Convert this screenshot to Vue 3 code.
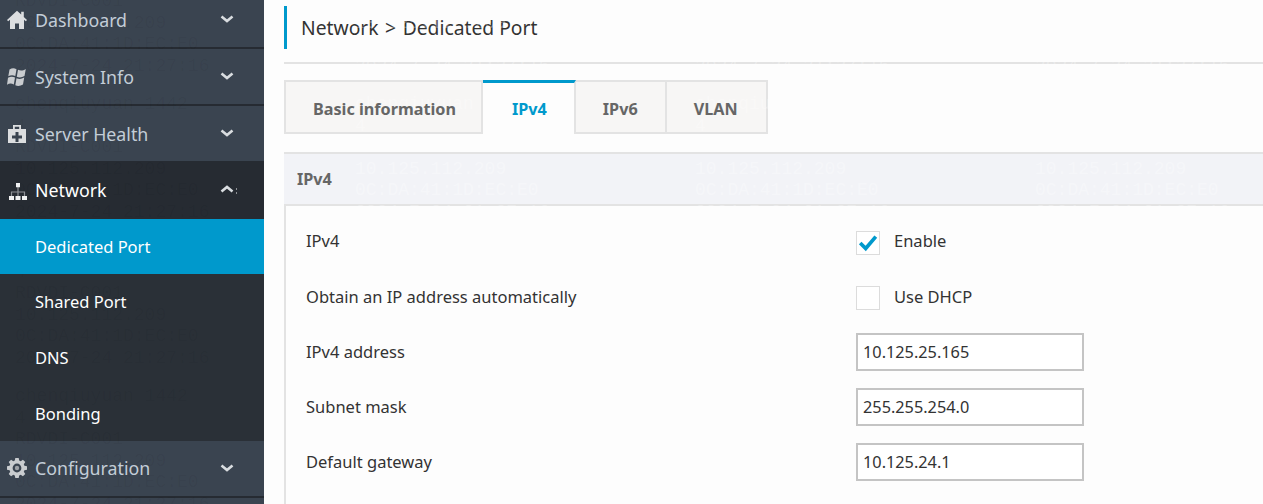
<script setup>
const topItems = [
  { label: 'Dashboard', icon: 'home' },
  { label: 'System Info', icon: 'win' },
  { label: 'Server Health', icon: 'med' }
]
const subItems = ['Shared Port', 'DNS', 'Bonding']
const tabs = ['Basic information', 'IPv4', 'IPv6', 'VLAN']
const fields = [
  { label: 'IPv4 address', value: '10.125.25.165' },
  { label: 'Subnet mask', value: '255.255.254.0' },
  { label: 'Default gateway', value: '10.125.24.1' }
]
const wmLines = ['chenqiuyuan 1442', '4', 'RDVDI-C001', '10.125.112.209', '0C:DA:41:1D:EC:E0', '2024-7-24 21:27:16']
const wmCells = 16
</script>

<template>
  <div class="page">
    <aside class="side">
      <div v-for="it in topItems" :key="it.label" class="top plain">
        <svg class="ico" viewBox="0 0 20 20">
          <path v-if="it.icon === 'home'" fill="#dcdee0" d="M10 .8 0 10l1.200 1.300L3 9.800V19h5v-5.500h4V19h5V9.800l1.800 1.500L20 10l-3.200-3V1.800h-2.600v2.700z" />
          <path v-else-if="it.icon === 'win'" fill="#c9cccf" d="M2.500 2.500C5 1 7.200 1 9.500 2.200L8.300 9C6 8 3.700 8 1.300 9.300zM11 2.800c2.500 1.200 5 1 7.800-.8l-1.300 7c-2.700 1.700-5.200 1.900-7.700.8zM1 10.800C3.400 9.600 5.700 9.600 8 10.600L6.800 17.500C4.500 16.300 2.300 16.300 0 17.700zM9.500 11.300c2.500 1.100 5 1 7.700-.7L16 17.400c-2.700 1.700-5.200 1.900-7.700.8z" />
          <path v-else fill="#dcdee0" fill-rule="evenodd" d="M6 1h8v4h5v14H1V5h5zM7.800 2.800V5h4.400V2.800zM8.500 8v3.500H5v3h3.500V18h3v-3.500H15v-3h-3.500V8z" />
        </svg>
        <span class="top-label">{{ it.label }}</span>
        <svg class="chev" viewBox="0 0 14 8"><path d="M1.500 1.500 7 6l5.500-4.500" /></svg>
      </div>

      <div class="top open">
        <svg class="ico net" viewBox="0 0 20 20">
          <path fill="none" stroke="#8d9095" stroke-width="1.200" d="M10 6v5M3.500 15v-4h13v4M10 11v4" />
          <path fill="#f0f1f2" d="M8 2h4v4.200H8zM1 15h5v4H1zM7.500 15h5v4h-5zM14 15h5v4h-5z" />
        </svg>
        <span class="top-label">Network</span>
        <svg class="chev up" viewBox="0 0 14 8"><path d="M1.500 6.500 7 2l5.500 4.500" /></svg>
        <span class="chev-tail"></span>
      </div>
      <div class="sub active"><span class="sub-text">Dedicated Port</span></div>
      <div v-for="s in subItems" :key="s" class="sub"><span class="sub-text">{{ s }}</span></div>

      <div class="top last">
        <svg class="ico" viewBox="0 0 20 20">
          <path fill="#c9cccf" fill-rule="evenodd" d="M8.300 0h3.400l.5 2.600 1.500.6 2.200-1.500 2.400 2.400-1.500 2.200.6 1.500L20 8.300v3.400l-2.600.5-.6 1.500 1.500 2.200-2.400 2.400-2.200-1.500-1.500.6-.5 2.600H8.300l-.5-2.600-1.500-.6-2.200 1.500-2.400-2.400 1.500-2.200-.6-1.500L0 11.700V8.300l2.600-.5.6-1.500-1.500-2.200 2.400-2.400 2.200 1.500 1.500-.6zM10 5.600a4.400 4.400 0 1 0 0 8.800 4.400 4.400 0 0 0 0-8.800z" />
          <circle cx="10" cy="10" r="2.200" fill="#9ea2a7" />
        </svg>
        <span class="top-label">Configuration</span>
        <svg class="chev" viewBox="0 0 14 8"><path d="M1.500 1.500 7 6l5.500-4.500" /></svg>
      </div>

      <div class="wm dark" aria-hidden="true">
        <div v-for="n in wmCells" :key="n" class="wm-cell">
          <div v-for="l in wmLines" :key="l">{{ l }}</div>
        </div>
      </div>
    </aside>

    <main class="main">
      <header class="crumb">
        <h1 class="crumb-title">Network <span class="gt">&gt;</span> Dedicated Port</h1>
      </header>

      <nav class="tabs">
        <div v-for="t in tabs" :key="t" class="tab" :class="{ on: t === 'IPv4' }"><span class="fg">{{ t }}</span></div>
      </nav>

      <section class="panel">
        <div class="panel-head"><span class="fg">IPv4</span></div>
        <div class="form">
          <div class="row">
            <span class="lab fg">IPv4</span>
            <span class="check fg">
              <svg viewBox="0 0 24 24"><path d="M3.500 12 9.500 18 20.500 5" /></svg>
            </span>
            <span class="opt fg">Enable</span>
          </div>
          <div class="row">
            <span class="lab fg">Obtain an IP address automatically</span>
            <span class="check fg"></span>
            <span class="opt fg">Use DHCP</span>
          </div>
          <div v-for="f in fields" :key="f.label" class="row">
            <span class="lab fg">{{ f.label }}</span>
            <input class="inp fg" :value="f.value" />
          </div>
        </div>
      </section>

      <div class="wm light" aria-hidden="true">
        <div v-for="n in wmCells" :key="n" class="wm-cell">
          <div v-for="l in wmLines" :key="l">{{ l }}</div>
        </div>
      </div>
    </main>
  </div>
</template>

<style>
html, body { margin: 0; height: 100%; overflow: hidden; background: #fdfdfd; }
</style>

<style scoped>
.page {
  display: flex;
  height: 504px;
  overflow: hidden;
  font-family: "Noto Sans", "Open Sans", sans-serif;
  background: #fdfdfd;
}
.side {
  position: relative;
  z-index: 0;
  flex: 0 0 264px;
  height: 504px;
  overflow: hidden;
  background: #3a4450;
}
.top {
  display: flex;
  align-items: center;
  height: 55px;
  padding-left: 7px;
  border-bottom: 2px solid #262b32;
  color: #c3cdd7;
  font-size: 17.800px;
}
.top:first-child { margin-top: -8px; }
.top.open {
  height: 56px;
  border: 0;
  background: #262b32;
  color: #fff;
}
.ico, .top-label, .chev, .chev-tail, .sub-text, .fg { position: relative; z-index: 2; }
.top.plain .chev { top: -1px; }
.top.open .top-label { top: -1px; }
.top.open .chev { top: -2px; }
.ico { flex: 0 0 20px; width: 20px; height: 20px; margin-right: 8px; }
.ico.net { margin-left: 1px; margin-right: 7px; }
.top-label { flex: 1; }
.chev { flex: 0 0 14px; width: 14px; height: 8px; margin-right: 30px; fill: none; stroke: #d9dde0; stroke-width: 2.600; }
.chev.up { margin-right: 2px; }
.chev-tail { flex: 0 0 1px; height: 7px; margin-right: 27px; background: repeating-linear-gradient(#8d9095 0 2px, transparent 2px 4px); }
.sub {
  display: flex;
  align-items: center;
  height: 55.670px;
  padding-left: 35px;
  background: #2a3037;
  color: #fff;
  font-size: 16.500px;
}
.sub.active { position: relative; z-index: 3; height: 55px; background: #0099cc; }

.main {
  position: relative;
  z-index: 0;
  flex: 1;
  height: 504px;
  padding: 0 0 0 20px;
  overflow: hidden;
}
.crumb {
  height: 64px;
  box-sizing: border-box;
  padding-top: 6px;
  border-bottom: 2px solid #e3e3e3;
}
.crumb-title {
  margin: 0;
  height: 43px;
  padding-left: 14px;
  border-left: 3px solid #0099cc;
  color: #333;
  font-size: 19.300px;
  font-weight: 400;
  line-height: 43px;
}
.gt { margin: 0 1.500px; }
.tabs { display: flex; margin-top: 16px; }
.tab {
  height: 54px;
  box-sizing: border-box;
  padding: 0 27px;
  border: 2px solid #e3e3e3;
  border-left-width: 0;
  background: #f7f6f5;
  color: #666;
  font-size: 16.200px;
  font-weight: 700;
  line-height: 54px;
}
.tab:first-child { padding-right: 25px; border-left-width: 2px; }
.tab:last-child { padding-right: 28px; }
.tab.on {
  padding-left: 29px;
  background: #fdfdfd;
  border-top: 3px solid #0099cc;
  border-bottom: 0;
  color: #0099cc;
  line-height: 53px;
}
.panel { height: 400px; margin-top: 18px; border-left: 2px solid #e3e3e3; }
.panel-head {
  height: 54px;
  box-sizing: border-box;
  margin-left: -2px;
  padding-left: 13px;
  border-top: 2px solid #e3e3e3;
  border-bottom: 2px solid #e3e3e3;
  background: #f2f3f7;
  color: #666;
  font-size: 16.200px;
  font-weight: 700;
  line-height: 50px;
}
.form { display: flex; flex-direction: column; gap: 1px; padding: 9px 0 0 20px; }
.row { display: flex; align-items: center; height: 54px; }
.lab { flex: 0 0 550px; top: -1px; color: #333; font-size: 16.500px; }
.row:first-child .lab, .row:first-child .opt { top: -2px; }
.check {
  display: flex;
  box-sizing: border-box;
  width: 24px;
  height: 24px;
  margin-top: 2px;
  margin-right: 14px;
  border: 1px solid #dcdcdc;
  background: #fff;
}
.check svg { width: 22px; height: 22px; fill: none; stroke: #0099cc; stroke-width: 4; }
.opt { top: -1px; color: #333; font-size: 16.500px; }
.inp {
  width: 228px;
  height: 38px;
  box-sizing: border-box;
  padding: 0 5px;
  border: 2px solid #c4c4c4;
  border-radius: 0;
  background: #fff;
  color: #333;
  font: 16.300px "Noto Sans", "Open Sans", sans-serif;
  outline: none;
}
.wm {
  position: absolute;
  z-index: 1;
  display: grid;
  grid-template-columns: repeat(4, 340px);
  grid-auto-rows: 146px;
  pointer-events: none;
  font: 18px/21.500px "Liberation Mono", monospace;
  white-space: pre;
}
.wm.dark { left: 15px; top: -52px; color: rgba(0, 0, 0, 0.045); }
.wm.light { left: 91px; top: -52px; color: rgba(255, 255, 255, 0.3); }
</style>
